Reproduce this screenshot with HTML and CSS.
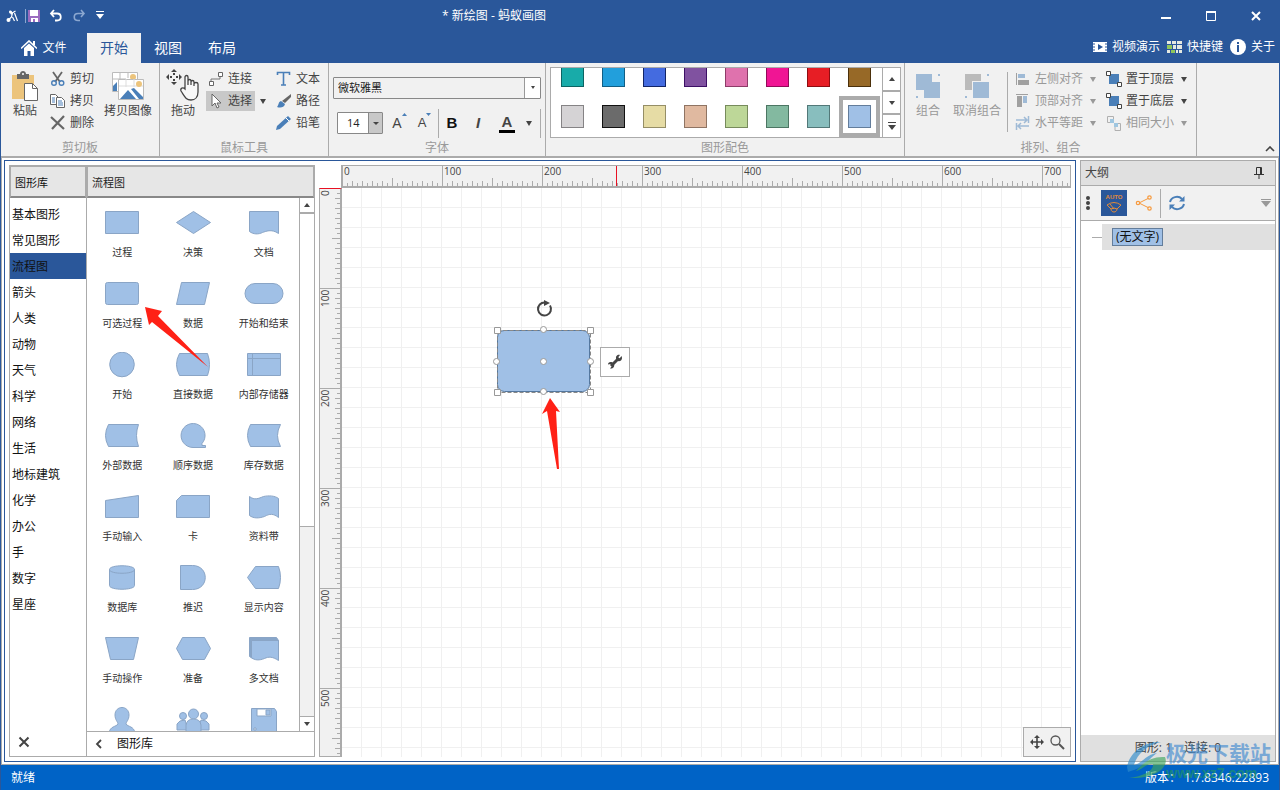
FILE: index.html
```html
<!DOCTYPE html>
<html lang="zh-CN">
<head>
<meta charset="utf-8">
<title>新绘图 - 蚂蚁画图</title>
<link rel="stylesheet" href="styles.css">
</head>
<body>
<div class="window">
  <header class="titlebar">
    <div class="quick">
      <svg class="logo" width="14" height="14" viewBox="0 0 14 14"><path d="M4 2l3 2-1 4-4 4M5 5l5-3M7 8l2 4M9 4l3 8" stroke="#fff" stroke-width="1.200" fill="none"/><circle cx="5" cy="3" r="1.500" fill="#fff"/><circle cx="3" cy="11" r="2" fill="#fff"/></svg>
      <button aria-label="保存"><svg width="12" height="12"><path fill="#9b6cc0" d="M0 0h12v12H0z"/><path fill="#fff" d="M2 0h8v6H2zM3 8h7v4H3z"/><path fill="#9b6cc0" d="M5 9h2v3H5z"/></svg></button>
      <button aria-label="撤销"><svg width="14" height="14"><path d="M5 1L2 4.500l3 3.500M2 4.500h6c5 0 5 7 0 7H6" fill="none" stroke="#fff" stroke-width="1.800"/></svg></button>
      <button aria-label="重做"><svg width="14" height="14"><path d="M9 1l3 3.500L9 8M12 4.500H6c-5 0-5 7 0 7h2" fill="none" stroke="#8ba7d0" stroke-width="1.600"/></svg></button>
      <button aria-label="自定义"><svg width="10" height="10"><path d="M1 0h8v1H1zM1 3h8L5 8z" fill="#fff"/></svg></button>
    </div>
    <h1 class="title">* 新绘图 - 蚂蚁画图</h1>
    <div class="controls">
      <button aria-label="最小化"><svg width="12" height="12"><path d="M1 7h10v2H1z" fill="#fff"/></svg></button>
      <button aria-label="最大化"><svg width="12" height="12"><path d="M1.500 1.500h9v9h-9z" fill="none" stroke="#fff"/><path d="M1 1h10v2H1z" fill="#fff"/></svg></button>
      <button aria-label="关闭"><svg width="12" height="12"><path d="M2 2l8 8M10 2l-8 8" stroke="#fff" stroke-width="2"/></svg></button>
    </div>
  </header>
  <nav class="tabs">
    <button class="tab file"><svg width="16" height="16"><path d="M0 8.500L8 1l8 7.500" fill="none" stroke="#fff" stroke-width="1.600"/><path d="M12 1h2v4h-2zM3 8l5-4.500L13 8v8H9.500v-5h-3v5H3z" fill="#fff"/></svg>文件</button>
    <button class="tab active">开始</button>
    <button class="tab">视图</button>
    <button class="tab">布局</button>
    <div class="links">
      <a href="#"><svg width="14" height="12"><path d="M0 1h14v10H0z" fill="#fff"/><path d="M0 3h2M0 6h2M0 9h2M12 3h2M12 6h2M12 9h2" stroke="#2a579a"/><path d="M5 3v6l5-3z" fill="#2a579a"/></svg>视频演示</a>
      <a href="#"><svg width="15" height="12"><path d="M0 0h4v3H0zM5 0h4v3H5zM10 0h5v3h-5zM0 9h3v3H0zM9 9h2v3H9zM12 9h3v3h-3zM6 4h3v4H6zM10 4h5v4h-5z" fill="#e4e9e0"/><path d="M0 4h5v4H0zM4 9h4v3H4z" fill="#8fc65a"/></svg>快捷键</a>
      <a href="#"><svg width="16" height="16"><circle cx="8" cy="8" r="8" fill="#fff"/><path d="M7 3h2v2H7zM7 6h2v7H7z" fill="#2a579a"/></svg>关于</a>
    </div>
  </nav>

  <section class="ribbon">
    <div class="group clip">
      <div class="body">
        <button class="big"><svg width="28" height="30"><path d="M1 4h22v24H1z" fill="#ecc47c"/><path d="M6 3h3c0-4 6-4 6 0h3v5H6z" fill="#666"/><circle cx="12" cy="3" r="1" fill="#fff"/><path d="M13.500 12.500h8l5 5v12h-13z" fill="#fff" stroke="#666"/><path d="M21.500 12.500v5h5" fill="none" stroke="#666"/></svg>粘贴</button>
        <div class="stack">
          <button class="small"><svg width="16" height="16"><path d="M3 1l7 10M12 1L5 11" stroke="#666" stroke-width="1.800"/><circle cx="4" cy="12" r="2.300" fill="none" stroke="#4a7fb8" stroke-width="1.400"/><circle cx="11.500" cy="12" r="2.300" fill="none" stroke="#4a7fb8" stroke-width="1.400"/></svg>剪切</button>
          <button class="small"><svg width="16" height="16"><path d="M.5 1.500h5l3 3v7h-8z" fill="#fff" stroke="#666"/><path d="M6.500 4.500h5l3 3v7h-8z" fill="#fff" stroke="#666"/><path d="M2 5h3M2 7h3M2 9h3M8 8h4M8 10h5M8 12h5" stroke="#4a7fb8"/></svg>拷贝</button>
          <button class="small"><svg width="16" height="16"><path d="M1 2l13 12M14 1L2 14" stroke="#666" stroke-width="2.200"/></svg>删除</button>
        </div>
        <button class="big"><svg width="34" height="30"><path d="M1.500 1.500h25v19h-25z" fill="#fff" stroke="#bbb"/><path d="M9 1v8M17 1v6M1 8h14" stroke="#bbb"/><circle cx="22" cy="6" r="3" fill="#ecc47c"/><path d="M2 20v-5l4-4v9z" fill="#4a7fb8"/><path d="M7.500 8.500h25v20h-25z" fill="#fff" stroke="#bbb"/><path d="M15 8v8M23 8v8M8 15h24" stroke="#ddd"/><circle cx="28" cy="13" r="3" fill="#ecc47c"/><path d="M9 28l8-9 8 9zM20 18l3-1 9 9v2h-4z" fill="#4a7fb8"/></svg>拷贝图像</button>
      </div>
      <div class="name">剪切板</div>
    </div>
    <div class="group mouse">
      <div class="body">
        <button class="big"><svg width="34" height="32"><path d="M8 0l3 3H5zM8 16l3-3H5zM0 8l3-3v6zM16 8l-3-3v6zM7 4h2v2H7zM7 10h2v2H7zM4 7h2v2H4zM10 7h2v2h-2z" fill="#444"/><path d="M19 20V8c0-2 3-2 3 0v8-4c0-2 3-2 3 0v4-3c0-2 3-2 3 0v4-2c0-2 4-2 4 0v8c0 5-3 8-7 8-5 0-6-3-10-9-1-3 2-4 4-2z" fill="#f8f8f8" stroke="#444" stroke-width="1.300"/></svg>拖动</button>
        <div class="stack link-col">
          <button class="small"><svg width="16" height="16"><path d="M3 10V8h9V5" fill="none" stroke="#777"/><path d="M1.500 10.500h4v4h-4zM10.500 1.500h4v4h-4z" fill="#fff" stroke="#666"/></svg>连接</button>
          <div class="split"><button class="small chosen"><svg width="16" height="16"><path d="M4 1v12l3-3 2 5 2-1-2-4h4z" fill="#fff" stroke="#666"/></svg>选择</button><button class="tri" aria-label="更多选择"></button></div>
        </div>
        <div class="stack">
          <button class="small"><svg width="16" height="16"><path d="M1.500 4V1.500h12V4M7.500 2v12M5 14h5" fill="none" stroke="#4a7fb8" stroke-width="1.600"/></svg>文本</button>
          <button class="small"><svg width="16" height="16"><path d="M15 1v3L9 10 6 8z" fill="#666"/><path d="M5 8l4 3c-1 4-5 4-8 3 2-2 1-5 4-6z" fill="#4a7fb8"/></svg>路径</button>
          <button class="small"><svg width="16" height="16"><path d="M0 15l1-4L12 1l3 3L4 14z" fill="#4a7fb8"/><path d="M10 3l3 3" stroke="#fff"/></svg>铅笔</button>
        </div>
      </div>
      <div class="name">鼠标工具</div>
    </div>
    <div class="group font">
      <div class="body fontbody">
        <div class="combo"><select aria-label="字体"><option>微软雅黑</option></select></div>
        <div class="fontrow">
          <div class="combo size"><select aria-label="字号"><option>14</option></select></div>
          <button class="fa" aria-label="增大字号"><span>A</span><svg width="5" height="4"><path d="M0 3l2.500-3L5 3z" fill="#4a7fb8"/></svg></button>
          <button class="fa less" aria-label="减小字号"><span>A</span><svg width="5" height="4"><path d="M0 0l2.500 3L5 0z" fill="#4a7fb8"/></svg></button>
          <i class="bar"></i>
          <button class="fb">B</button>
          <button class="fb it">I</button>
          <button class="fb color">A</button>
          <button class="tri" aria-label="字体颜色"></button>
          <i class="bar"></i>
        </div>
      </div>
      <div class="name">字体</div>
    </div>
    <div class="group palette">
      <div class="body">
        <div class="gallery">
          <div class="swatches">
            <button class="sw s1" aria-label="青色"></button><button class="sw s2" aria-label="天蓝"></button><button class="sw s3" aria-label="蓝色"></button><button class="sw s4" aria-label="紫色"></button><button class="sw s5" aria-label="粉色"></button><button class="sw s6" aria-label="洋红"></button><button class="sw s7" aria-label="红色"></button><button class="sw s8" aria-label="棕色"></button>
            <button class="sw s9" aria-label="浅灰"></button><button class="sw s10" aria-label="深灰"></button><button class="sw s11" aria-label="米黄"></button><button class="sw s12" aria-label="肉色"></button><button class="sw s13" aria-label="浅绿"></button><button class="sw s14" aria-label="绿色"></button><button class="sw s15" aria-label="蓝绿"></button><button class="sw s16 on" aria-label="浅蓝"></button>
          </div>
          <div class="pager">
            <button aria-label="上一行"><svg width="8" height="6"><path d="M1 5l3-4 3 4z" fill="#444"/></svg></button>
            <button aria-label="下一行"><svg width="8" height="6"><path d="M1 1l3 4 3-4z" fill="#444"/></svg></button>
            <button aria-label="全部"><svg width="8" height="8"><path d="M0 0h8v1H0zM0 3h8L4 8z" fill="#444"/></svg></button>
          </div>
        </div>
      </div>
      <div class="name">图形配色</div>
    </div>
    <div class="group arrange">
      <div class="body">
        <button class="big off" disabled><svg width="24" height="24"><path d="M0 0h16v8h8v16H8v-8H0zM22 0h2v2h-2zM0 22h2v2H0z" fill="#9fbad6"/></svg>组合</button>
        <button class="big off" disabled><svg width="24" height="24"><path d="M0 0h16v7H7v9H0z" fill="#bbb"/><path d="M8 8h16v16H8zM22 0h2v2h-2zM0 22h2v2H0z" fill="#9fbad6"/></svg>取消组合</button>
        <i class="bar tall"></i>
        <div class="stack">
          <button class="small off" disabled><svg width="16" height="16"><path d="M1 2h1v12H1zM3 9h11v5H3z" fill="#a0a0a0"/><path d="M3 3h7v4H3z" fill="#9fbad6"/></svg>左侧对齐<b class="caret"></b></button>
          <button class="small off" disabled><svg width="16" height="16"><path d="M1 1h12v1H1zM2 3h5v11H2z" fill="#a0a0a0"/><path d="M8 3h4v7H8z" fill="#9fbad6"/></svg>顶部对齐<b class="caret"></b></button>
          <button class="small off" disabled><svg width="16" height="16"><path d="M1 5h11M9 2l3 3-3 3M14 11H3M6 8l-3 3 3 3M13.500 1v7M1.500 8v7" fill="none" stroke="#9fbad6" stroke-width="1.500"/></svg>水平等距<b class="caret"></b></button>
        </div>
        <div class="stack">
          <button class="small"><svg width="16" height="16"><path d="M3 3h10v10H3z" fill="#4a7fb8"/><path d="M.5.5h4v4h-4zM11.500 11.500h4v4h-4z" fill="#fff" stroke="#444"/></svg>置于顶层<b class="caret"></b></button>
          <button class="small"><svg width="16" height="16"><path d="M3 3h10v10H3z" fill="#4a7fb8"/><path d="M.5.5h4v4h-4zM11.500 11.500h4v4h-4z" fill="#fff" stroke="#444"/></svg>置于底层<b class="caret"></b></button>
          <button class="small off" disabled><svg width="16" height="16"><path d="M6 5.500v2H1.500v-6h6V4M9 12v3.500h5.500v-7H12" fill="none" stroke="#b0b0b0"/><path d="M4 4h4v4H4zM8 8h4v4H8z" fill="#9fc6e0"/></svg>相同大小<b class="caret"></b></button>
        </div>
      </div>
      <div class="name">排列、组合</div>
    </div>
    <button class="collapse" aria-label="折叠功能区"><svg width="10" height="6"><path d="M1 5l4-4 4 4" fill="none" stroke="#444" stroke-width="1.600"/></svg></button>
  </section>

  <main class="main">
    <section class="document">
      <aside class="library">
        <div class="cats">
          <h2>图形库</h2>
          <ul>
            <li><button>基本图形</button></li><li><button>常见图形</button></li><li><button class="sel">流程图</button></li><li><button>箭头</button></li><li><button>人类</button></li><li><button>动物</button></li><li><button>天气</button></li><li><button>科学</button></li><li><button>网络</button></li><li><button>生活</button></li><li><button>地标建筑</button></li><li><button>化学</button></li><li><button>办公</button></li><li><button>手</button></li><li><button>数字</button></li><li><button>星座</button></li>
          </ul>
          <button class="close" aria-label="关闭图形库"><svg width="12" height="12"><path d="M1.500 1.500l9 9M10.500 1.500l-9 9" stroke="#444" stroke-width="2"/></svg></button>
        </div>
        <div class="shapes">
          <h2>流程图</h2>
          <div class="scroller">
            <div class="grid">
              <button><svg viewBox="0 0 40 26"><path d="M3.500 1.500h33v22h-33z"/></svg>过程</button>
              <button><svg viewBox="0 0 40 26"><path d="M3.500 12.500l17-11 17 11-17 11z"/></svg>决策</button>
              <button><svg viewBox="0 0 40 26"><path d="M5.500 1.500h29v22c-7-5-13-2-16-1-4 2-9 2-13-1z"/></svg>文档</button>
              <button><svg viewBox="0 0 40 26"><rect x="3.500" y="1.500" width="33" height="22" rx="2"/></svg>可选过程</button>
              <button><svg viewBox="0 0 40 26"><path d="M8.500 1.500h28l-5 22h-28z"/></svg>数据</button>
              <button><svg viewBox="0 0 40 26"><rect x="1" y="2.500" width="38" height="20" rx="10"/></svg>开始和结束</button>
              <button><svg viewBox="0 0 40 26"><circle cx="20" cy="12.500" r="12.300"/></svg>开始</button>
              <button><svg viewBox="0 0 40 26"><path d="M6.500 1.500h28q4 11 0 22h-28q-6-11 0-22z"/></svg>直接数据</button>
              <button><svg viewBox="0 0 40 26"><path d="M3.500 1.500h33v22h-33zM3.500 6.500h33M8.500 1.500v22"/></svg>内部存储器</button>
              <button><svg viewBox="0 0 40 26"><path d="M6.500 1.500h30q-4 11 0 22h-30q-6-11 0-22z"/></svg>外部数据</button>
              <button><svg viewBox="0 0 40 26"><path d="M20 24.500a12 12 0 1 1 9-4v2h3.500v2z"/></svg>顺序数据</button>
              <button><svg viewBox="0 0 40 26"><path d="M6.500 1.500h30q-6 11 0 22h-30q-6-11 0-22z"/></svg>库存数据</button>
              <button><svg viewBox="0 0 40 26"><path d="M3.500 6.500l33-5v22h-33z"/></svg>手动输入</button>
              <button><svg viewBox="0 0 40 26"><path d="M8.500 1.500h28v22h-33v-17z"/></svg>卡</button>
              <button><svg viewBox="0 0 40 26"><path d="M5.500 2.500c5 4 9 2 14 0 5-1 11-1 15 2v19c-5-4-9-4-14-1-6 2-11 2-15-1z"/></svg>资料带</button>
              <button><svg viewBox="0 0 40 26"><path d="M7.500 4.500v16c0 5 25 5 25 0v-16c0-5-25-5-25 0zc0 5 25 5 25 0"/></svg>数据库</button>
              <button><svg viewBox="0 0 40 26"><path d="M7.500.5h12c17 0 17 24 0 24h-12z"/></svg>推迟</button>
              <button><svg viewBox="0 0 40 26"><path d="M3.500 12.500l8-11h23q4 11 0 22h-23z"/></svg>显示内容</button>
              <button><svg viewBox="0 0 40 26"><path d="M3.500 1.500h33l-5 22h-23z"/></svg>手动操作</button>
              <button><svg viewBox="0 0 40 26"><path d="M3.500 12.500l6-11h22l6 11-6 11h-22z"/></svg>准备</button>
              <button><svg viewBox="0 0 40 26"><path class="dark" d="M5.500 1.500h27l2 3-26 18-3-2z"/><path d="M7.500 4.500h27v20c-6-4-10-4-14-2-5 2-10 2-13-1z"/></svg>多文档</button>
              <button aria-label="用户"><svg viewBox="0 0 40 26"><path d="M13 8c0-10 14-10 14 0 0 5-3 7-3 9 2 3 8 2 9 9H7c1-7 7-6 9-9 0-2-3-4-3-9z"/></svg></button>
              <button aria-label="团队"><svg viewBox="0 0 40 26"><circle cx="10" cy="9" r="3.500"/><circle cx="31" cy="9" r="3.500"/><path d="M4 23v-6q2-4 8-4l3 10zM36 23v-6q-2-4-8-4l-3 10z"/><circle cx="20.500" cy="7" r="5"/><path d="M13 26v-8q1-6 7.500-6t7.500 6v8z"/></svg></button>
              <button aria-label="软盘"><svg viewBox="0 0 40 26"><path d="M7.500 1.500h23l2 3V26h-25z"/><path class="white" d="M13 2h14v7H13zM10 21h2v2h-2z"/><path d="M22 3h4v5h-4z"/></svg></button>
            </div>
            <div class="scrollbar"><button aria-label="向上"><svg width="8" height="6"><path d="M1 5l3-4 3 4z" fill="#444"/></svg></button><i class="thumb"></i><button aria-label="向下"><svg width="8" height="6"><path d="M1 1l3 4 3-4z" fill="#444"/></svg></button></div>
          </div>
          <button class="back"><svg width="8" height="10"><path d="M6 1L2 5l4 4" fill="none" stroke="#444" stroke-width="1.800"/></svg>图形库</button>
        </div>
      </aside>
      <div class="stage">
        <div class="hruler"><span>0</span><span>100</span><span>200</span><span>300</span><span>400</span><span>500</span><span>600</span><span>700</span><i class="mark"></i></div>
        <div class="vruler"><span>0</span><span>100</span><span>200</span><span>300</span><span>400</span><span>500</span></div>
        <div class="canvas">
          <svg class="node" width="106" height="98">
            <rect x="6.500" y="30.500" width="92" height="61" rx="7" fill="#a0c0e6" stroke="#55789f"/>
            <rect x="6.500" y="30.500" width="93" height="62" fill="none" stroke="#888" stroke-dasharray="4 2"/>
            <path d="M54 2.500a6.500 6.500 0 1 0 5 3" fill="none" stroke="#444" stroke-width="2"/><path d="M53 0l6 3-6 3z" fill="#444"/>
            <g fill="#fff" stroke="#999"><path d="M3.500 27.500h6v6h-6zM96.500 27.500h6v6h-6zM3.500 89.500h6v6h-6zM96.500 89.500h6v6h-6z"/><circle cx="52.500" cy="29.500" r="3"/><circle cx="52.500" cy="61.500" r="3"/><circle cx="5.500" cy="61.500" r="3"/><circle cx="99.500" cy="61.500" r="3"/><circle cx="52.500" cy="91.500" r="3"/></g>
          </svg>
          <button class="wrench" aria-label="设置"><svg width="16" height="16"><path d="M4 12l8-8" stroke="#444" stroke-width="3"/><path d="M14.500 2l-2 2.500-1.500-1L13 1C10 0 8 3 9.500 5.500l1.500 1.500c3 1 5-2 3.500-5zM1 10.500l2.500-.5 1.500 2-2 2.500c3 .5 5-2 4-4.500L5.500 8.500C3 7.500 1 8.500 1 10.500z" fill="#444"/></svg></button>
          <div class="zoombox"><button aria-label="平移"><svg width="14" height="14"><path d="M7 1v12M1 7h12" stroke="#444" stroke-width="1.600"/><path d="M7 0l3 3H4zM7 14l3-3H4zM0 7l3-3v6zM14 7l-3-3v6z" fill="#444"/></svg></button><button aria-label="缩放"><svg width="15" height="15"><circle cx="5.500" cy="5.500" r="4.500" fill="none" stroke="#555" stroke-width="1.300"/><path d="M9 9l5 5" stroke="#555" stroke-width="2"/></svg></button></div>
        </div>
      </div>
    </section>
    <aside class="outline">
      <div class="head"><h2>大纲</h2><button aria-label="固定"><svg width="10" height="12"><path d="M2.500 7V.5h5V7M6.500 1v6M0 7.500h10M5 8v4" fill="none" stroke="#333"/></svg></button></div>
      <div class="tools">
        <svg width="6" height="16"><g fill="#444"><circle cx="3" cy="3" r="2"/><circle cx="3" cy="8" r="2"/><circle cx="3" cy="13" r="2"/></g></svg>
        <button class="auto" aria-label="自动布局"><b>AUTO</b><svg width="16" height="12"><path d="M1 4q7-5 14 0l-4 4q-3-2-6 0zM5 8c0 4 6 4 6 0M4 3l4 5" fill="none" stroke="#e08a3a"/></svg></button>
        <button class="share" aria-label="分支"><svg width="18" height="16"><path d="M4 8l10-5M4 8l10 5" stroke="#f79a3e"/><g fill="#f1f1f1" stroke="#f79a3e" stroke-width="1.200"><circle cx="3" cy="8" r="1.700"/><circle cx="14.500" cy="2.500" r="1.700"/><circle cx="14.500" cy="13.500" r="1.700"/></g></svg></button>
        <i class="bar"></i>
        <button class="refresh" aria-label="刷新"><svg width="18" height="16"><path d="M2 7a7 6.500 0 0 1 12-3M16 9a7 6.500 0 0 1-12 3" fill="none" stroke="#4a7fb8" stroke-width="2"/><path d="M16.500 1v5.500H11zM1.500 15V9.500H7z" fill="#4a7fb8"/></svg></button>
        <button class="more" aria-label="更多"><svg width="10" height="9"><path d="M0 0h10v1H0zM0 2h10L5 8z" fill="#999"/></svg></button>
      </div>
      <ul class="tree"><li><button><span>(无文字)</span></button></li></ul>
      <div class="count"><span>图形: 1</span><span>连接: 0</span></div>
    </aside>
  </main>
  <footer class="status"><span>就绪</span><span>版本： 1.7.8346.22893</span></footer>

  <svg class="arrow a1" width="66" height="62"><path d="M1 1l17 4-4 5 50 51L8 16 5 19z" fill="#ff2116"/></svg>
  <svg class="arrow a2" width="20" height="74"><path d="M9 1l10 14-4-1 3 58h-2L6 14l-5 3z" fill="#ff2116"/></svg>
  <div class="brand">
    <svg width="44" height="44" viewBox="0 0 44 44"><path d="M2 27C4 14 18 1 36 2 22 5 12 14 9 25c9-2 11-10 23-12C24 18 23 26 3 32z" fill="#2f8ccc"/><path d="M40 17c4 9-7 22-36 21 14-2 25-7 24-14-7-1-11 6-17 7 7-8 15-15 29-14z" fill="#41a65f"/></svg>
    <div><strong>极光下载站</strong><em>www.xz7.com</em></div>
  </div>
</div>
</body>
</html>
```
FILE: styles.css
```css
*, *::before, *::after { box-sizing: border-box; }
body { margin: 0; font: 12px/16px "Open Sans", "Noto Sans CJK SC", sans-serif; color: #444; }
button { margin: 0; padding: 0; border: 0; background: none; font: inherit; color: inherit; display: flex; align-items: center; justify-content: center; white-space: nowrap; }
svg { flex: none; display: block; }
h1, h2, ul { margin: 0; padding: 0; font-weight: 400; list-style: none; }
i { display: block; flex: none; }
.window { position: relative; height: 100vh; min-height: 700px; display: flex; flex-direction: column; background: #2a579a; padding: 0 1px; overflow: hidden; }

.titlebar { height: 33px; flex: none; display: flex; align-items: center; color: #fff; padding-bottom: 2px; }
.quick { display: flex; align-items: center; gap: 9px; padding-left: 4px; }
.quick .logo { width: 21px; padding-right: 5px; border-right: 1px solid #8ba7d0; margin-right: -7px; }
.title { flex: 1; text-align: center; font-size: 12px; }
.controls { width: 396px; padding-right: 17px; display: flex; justify-content: flex-end; gap: 33px; }

.tabs { height: 30px; flex: none; display: flex; color: #fff; }
.tab { font-size: 14px; padding: 0 13px; }
.tab.file { width: 86px; padding: 0; gap: 5px; font-size: 12px; }
.tab.active { background: #f1f1f1; color: #2a579a; }
.links { margin-left: auto; padding: 0 4px 3px 0; display: flex; align-items: center; gap: 7px; }
.links a { display: flex; align-items: center; gap: 5px; color: #fff; text-decoration: none; }

.ribbon { height: 95px; flex: none; display: flex; background: #f1f1f1; border-bottom: 2px solid #ababab; }
.group { flex: none; display: flex; flex-direction: column; border-right: 1px solid #ababab; padding: 5px 4px 0; }
.clip { width: 159px; }
.mouse { width: 169px; }
.font { width: 217px; padding-top: 4px; }
.palette { width: 359px; padding-top: 4px; }
.arrange { width: 292px; }
.body { flex: 1; display: flex; align-items: flex-start; }
.name { height: 16px; text-align: center; color: #999; }
.big { flex-direction: column; height: 51px; padding: 3px 0 0; justify-content: space-between; }
.clip .big:last-child { margin-left: 10px; }
.clip .big:first-child { margin: 0 11px 0 6px; }
.mouse .big { margin: 0 6px 0 2px; padding-top: 1px; }
.mouse .body { padding-right: 4px; }
.arrange .big { margin: 0 6px 0 7px; padding-top: 6px; }
.off { color: #999; }
.stack { display: flex; flex-direction: column; }
.small { height: 22px; gap: 4px; justify-content: flex-start; }
.small:not(.off) { color: #444; }
.split { display: flex; align-items: center; height: 22px; }
.link-col > .small { padding-left: 2px; }
.link-col { flex: 1; }
.chosen { height: 20px; background: #c8c8c8; padding: 0 3px 0 2px; }
.tri { width: 16px; height: 20px; }
.tri::after, .caret { content: ""; width: 6px; border: 3px solid transparent; border-top: 5px solid #444; border-bottom: 0; }
.caret { margin-left: 3px; }
.off .caret { border-top-color: #999; }
.arrange .stack { margin-left: 7px; }
.arrange .stack + .stack { margin-left: 10px; }
.bar { width: 1px; height: 29px; background: #ababab; }
.bar.tall { height: 60px; margin-top: 4px; }
.fontbody { flex-direction: column; align-items: stretch; padding-top: 10px; gap: 9px; }
.combo { position: relative; height: 22px; width: 208px; }
.combo select { width: 100%; height: 22px; appearance: none; border: 1px solid #888; border-radius: 1px; background: linear-gradient(90deg, #f1f1f1 190px, #999 190px, #999 191px, #fff 191px); font: inherit; font-size: 11px; color: #222; padding: 0 4px; }
.combo::after { content: ""; position: absolute; right: 6px; top: 9px; border: 2px solid transparent; border-top: 3px solid #444; border-bottom: 0; }
.combo.size { width: 46px; margin-left: 4px; }
.combo.size select { background: linear-gradient(90deg, #fff 30px, #888 30px, #888 31px, #c8c8c8 31px); padding: 0 9px; }
.combo.size::after { right: 4px; border-width: 3px 3px 0; top: 10px; }
.fontrow { display: flex; align-items: center; height: 30px; }
.fa { width: 25px; align-items: flex-start; font: 14px/20px "Liberation Sans", sans-serif; color: #444; }
.fa:not(.less) { margin-left: 4px; }
.fa.less { font-size: 13px; margin-right: 1px; }
.fb { width: 26px; font: bold 15px/20px "Liberation Sans", sans-serif; color: #111; }
.fb:first-of-type { margin-left: 2px; }
.it { font-style: italic; color: #444; }
.color { width: 16px; height: 20px; margin: 0 6px 0 8px; border-bottom: 3px solid #000; line-height: 17px; color: #444; }
.fontrow .bar:last-child { margin-left: 3px; }

.gallery { flex: 1; height: 71px; display: flex; border: 1px solid #ababab; background: #fff; margin-right: -1px; }
.swatches { flex: 1; overflow: hidden; display: grid; grid-template-columns: repeat(8, 41px); grid-auto-rows: 41px; align-content: end; padding-left: 1px; }
.sw { padding: 9px; }
.sw::before { content: ""; width: 23px; height: 23px; flex: none; background: var(--c); border: 1px solid var(--e); }
.sw.on { border: 4px solid #ababab; padding: 5px; }
.s1 { --c: #18aba9; --e: #0c6463; } .s2 { --c: #229fdc; --e: #125f85; } .s3 { --c: #446be0; --e: #122567; } .s4 { --c: #8052a0; --e: #3c1065; }
.s5 { --c: #df72ad; --e: #8d3c68; } .s6 { --c: #f01594; --e: #920a59; } .s7 { --c: #e71e25; --e: #8e0d12; } .s8 { --c: #976927; --e: #4b300b; }
.s9 { --c: #d5d3d5; --e: #858385; } .s10 { --c: #6b6b6b; --e: #111; } .s11 { --c: #e6dca5; --e: #958e66; } .s12 { --c: #e0b9a0; --e: #8f7463; }
.s13 { --c: #bdd798; --e: #778b5c; } .s14 { --c: #83b9a0; --e: #4c7663; } .s15 { --c: #88bebe; --e: #527878; } .s16 { --c: #a0c0e6; --e: #637d9b; }
.pager { width: 18px; display: flex; flex-direction: column; border-left: 1px solid #ababab; }
.pager button { flex: 1; }
.pager button + button { border-top: 2px solid #ababab; }
.collapse { margin: auto 4px 4px auto; }

.main { flex: 1; min-height: 0; display: flex; gap: 4px; background: #fff; border: 1px solid #ababab; border-top: 0; padding: 2px; }
.document { flex: 1; min-width: 0; display: flex; border: 1px solid #2a579a; padding: 4px; gap: 4px; }
.library { width: 306px; flex: none; display: flex; border: 1px solid #ababab; }
.library h2 { height: 32px; padding: 8px 4px; font-size: 11px; line-height: 16px; background: #e6e6e6; border: 1px solid #ababab; border-bottom: 2px solid #888; }
.cats { width: 77px; flex: none; display: flex; flex-direction: column; border-right: 1px solid #ababab; color: #111; }
.cats ul { padding-top: 3px; }
.cats li button { width: 100%; height: 26px; padding: 2px 0 0 2px; justify-content: flex-start; }
.cats .sel { background: #2a579a; }
.close { margin: auto auto 8px 8px; }
.shapes { flex: 1; display: flex; flex-direction: column; min-width: 0; color: #222; }
.scroller { flex: 1; min-height: 0; display: flex; overflow: hidden; }
.grid { flex: 1; display: grid; grid-template-columns: repeat(3, 1fr); grid-auto-rows: 71px; }
.grid button { flex-direction: column; justify-content: flex-start; padding-top: 12px; gap: 9px; font-size: 10px; line-height: 14px; color: #333; }
.grid svg { width: 40px; height: 26px; fill: #a0c0e6; stroke: #8aa5c6; stroke-width: 1; }
.grid .dark { fill: #88a6c9; }
.grid .white { fill: #fff; }
.scrollbar { width: 15px; flex: none; display: flex; flex-direction: column; border-left: 1px solid #ababab; background: #f1f1f1; }
.scrollbar button { height: 15px; background: #fff; border-bottom: 1px solid #ababab; }
.scrollbar button:last-child { margin-top: auto; border-top: 1px solid #ababab; border-bottom: 0; }
.thumb { height: 59%; background: #fff; border: solid #ababab; border-width: 1px 0; }
.back { height: 25px; flex: none; border-top: 1px solid #ababab; justify-content: flex-start; padding-left: 8px; gap: 14px; color: #111; }

.stage { flex: 1; min-width: 0; display: grid; grid-template: 23px minmax(0, 1fr) / 23px minmax(0, 1fr); }
.hruler, .vruler { background-color: #f1f1f1; border: 1px solid #ababab; overflow: hidden; display: flex; color: #444; font-size: 10px; line-height: 11px; }
.hruler { grid-column: 2; position: relative; margin-left: -1px; border-bottom-width: 2px; background-image: linear-gradient(90deg, #ababab 1px, transparent 1px), linear-gradient(90deg, #ababab 1px, transparent 1px), linear-gradient(90deg, #ababab 1px, transparent 1px), linear-gradient(90deg, #ababab 1px, transparent 1px); background-size: 5px 3px, 10px 5px, 50px 8px, 100px 20px; background-position: 0 100%; background-repeat: repeat-x; }
.hruler span { flex: none; width: 100px; padding-left: 2px; }
.vruler { flex-direction: column; border-right-width: 2px; border-top: 1px solid #e81123; background-image: linear-gradient(#ababab 1px, transparent 1px), linear-gradient(#ababab 1px, transparent 1px), linear-gradient(#ababab 1px, transparent 1px), linear-gradient(#ababab 1px, transparent 1px); background-size: 3px 5px, 5px 10px, 8px 50px, 20px 100px; background-position: 100% -1px; background-repeat: repeat-y; }
.vruler span { flex: none; height: 100px; writing-mode: vertical-rl; transform: rotate(180deg); text-align: right; padding-bottom: 1px; width: 11px; }
.mark { position: absolute; left: 274px; top: 0; width: 1px; height: 100%; background: #e81123; }
.canvas { position: relative; overflow: hidden; background-image: linear-gradient(90deg, transparent 19px, #f0f0f0 19px), linear-gradient(transparent 19px, #f0f0f0 19px); background-size: 20px 20px; }
.node { position: absolute; left: 149px; top: 112px; }
.wrench { position: absolute; left: 258px; top: 159px; width: 30px; height: 30px; background: #fff; border: 1px solid #ababab; }
.zoombox { position: absolute; right: 0; bottom: 0; width: 48px; height: 30px; display: flex; align-items: center; justify-content: center; gap: 6px; background: #f1f1f1; border: 1px solid #ababab; }

.outline { width: 196px; flex: none; display: flex; flex-direction: column; border: 1px solid #ababab; }
.head { height: 25px; display: flex; align-items: center; justify-content: space-between; padding: 0 11px 0 4px; background: #e0e0e0; border-bottom: 1px solid #ababab; }
.head h2 { font-size: 12px; }
.tools { height: 35px; display: flex; align-items: center; background: #f1f1f1; border-bottom: 1px solid #ababab; padding: 0 4px; }
.auto { width: 26px; height: 26px; margin-left: 10px; flex-direction: column; background: #2a579a; color: #e08a3a; }
.auto b { font: bold 6px/8px "Liberation Sans", sans-serif; }
.share { margin: 0 7px 0 8px; }
.refresh { margin-left: 7px; }
.more { margin-left: auto; }
.tree { flex: 1; padding: 3px 0 0 11px; }
.tree li { display: flex; align-items: center; }
.tree li::before { content: ""; width: 10px; height: 1px; background: #ababab; }
.tree button { flex: 1; height: 26px; background: #e0e0e0; justify-content: flex-start; padding-left: 10px; color: #111; }
.tree span { border: 1px solid #637d9b; background: #a0c0e6; padding: 0 3px; }
.count { height: 26px; background: #e0e0e0; display: flex; align-items: center; justify-content: center; gap: 12px; }

.status { height: 25px; flex: none; display: flex; align-items: center; justify-content: space-between; padding: 0 10px; background: #0063c6; color: #fff; }
.arrow { position: absolute; }
.a1 { left: 144px; top: 306px; }
.a2 { left: 541px; top: 397px; }
.brand { position: absolute; right: 9px; bottom: 6px; height: 44px; display: flex; opacity: .65; pointer-events: none; }
.brand svg { margin-right: -3px; }
.brand div { display: flex; flex-direction: column; }
.brand strong { font: 700 21px/25px "Noto Sans CJK SC", sans-serif; color: #438bd0; }
.brand em { font: bold 14px/16px "Liberation Sans", sans-serif; color: #23975f; }
```
